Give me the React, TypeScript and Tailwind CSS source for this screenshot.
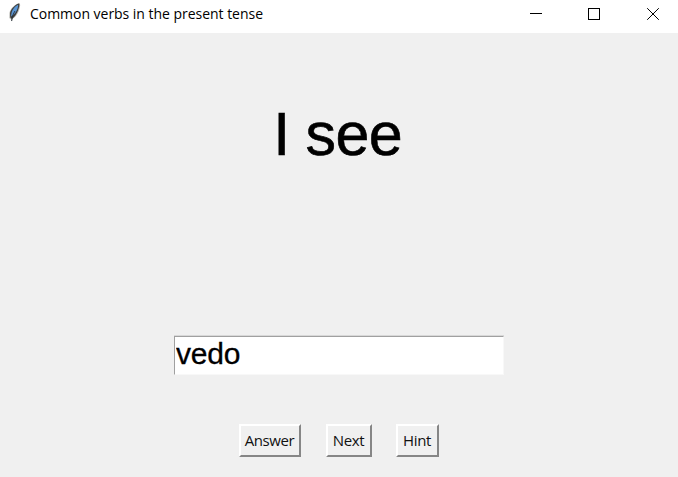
import type { ReactNode } from "react";

function Feather() {
  return (
    <svg width="16" height="24" viewBox="0 0 16 24" className="shrink-0">
      <path d="M12.5 3 C8 4 3 9 2.4 13 L2.3 18 L4 19.5 L5 21.5 L6 18.5 C10 16 12.6 11 13.2 5 Z" fill="#bdbdb8" />
      <path d="M12 3.5 C8 4.5 3.8 9 3 13 L3.2 17.5 L5 19 C9.5 15.5 12 9 12.4 4.5 Z" fill="#3c3d3c" />
      <path d="M11.2 4.8 C7.2 6.5 4 11 4.2 16.5 C8.3 14 11 9.5 11.2 4.8 Z" fill="#5995d4" />
      <path d="M8 11 C6.5 13.5 5 16 4.6 21" fill="none" stroke="#28313a" strokeWidth="0.9" />
    </svg>
  );
}

function TkButton({ className, children }: { className: string; children: ReactNode }) {
  return (
    <button
      className={`${className} flex h-[33px] items-center justify-center border-2 border-t-white border-l-white border-r-[#868686] border-b-[#868686] bg-[#f0f0f0] pr-px pb-px text-[15px] leading-none tracking-[-0.4px] whitespace-nowrap text-[#111]`}
    >
      {children}
    </button>
  );
}

export default function App() {
  return (
    <div className="flex h-[477px] w-[678px] flex-col overflow-hidden bg-[#f0f0f0] font-['Open_Sans',sans-serif] text-black">
      <header className="flex h-[33px] shrink-0 items-start bg-white pl-[7px]">
        <Feather />
        <h1 className="ml-[7px] pt-1 text-[14px] leading-5 tracking-[-0.03px] whitespace-nowrap">
          Common verbs in the present tense
        </h1>
        <svg width="134" height="33" viewBox="0 0 134 33" className="mr-[14px] ml-auto shrink-0" fill="none" stroke="black">
          <path d="M0 13.5h12M58.5 8.5h11v11h-11z" shapeRendering="crispEdges" />
          <path d="M117.2 8.2l11.6 11.6M128.8 8.2l-11.6 11.6" />
        </svg>
      </header>
      <main className="flex flex-1 flex-col items-center">
        <p className="mt-[66px] mr-[3px] h-[70px] font-['Liberation_Sans',sans-serif] text-[61px] leading-[70px] tracking-[-0.7px] whitespace-nowrap [-webkit-text-stroke:0.6px_black]">I see</p>
        <input
          defaultValue="vedo"
          className="mt-[167px] h-[39px] w-[330px] rounded-none border border-t-[#a0a0a0] border-r-[#f8f8f8] border-b-[#f8f8f8] border-l-[#a0a0a0] bg-white pb-[3px] pl-px font-['Liberation_Sans',sans-serif] text-[30px] leading-[35px] tracking-[-0.2px] outline-none [-webkit-text-stroke:0.3px_black] shadow-[0_-1px_0_#d8d8d8]"
        />
        <div className="mt-[49px] flex gap-6">
          <TkButton className="w-[62px]">Answer</TkButton>
          <TkButton className="ml-px w-[46px]">Next</TkButton>
          <TkButton className="w-[43px]">Hint</TkButton>
        </div>
      </main>
    </div>
  );
}
